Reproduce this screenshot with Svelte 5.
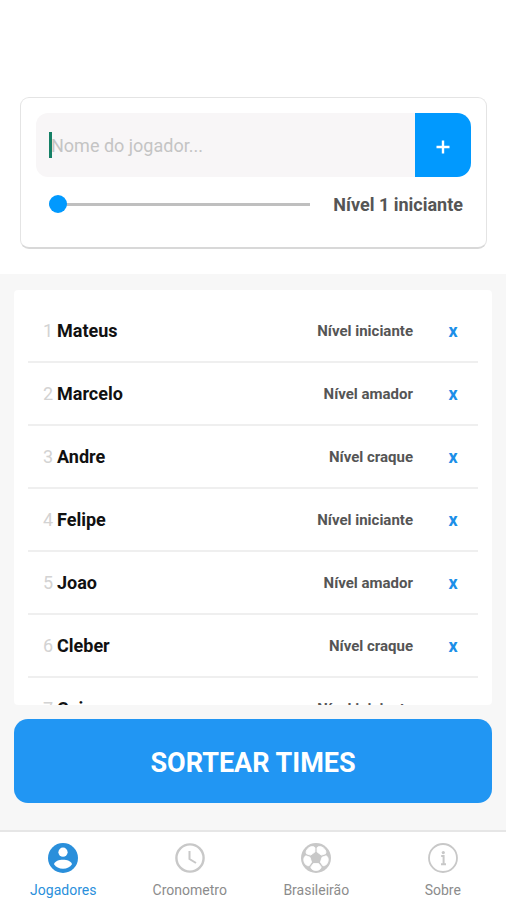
<script lang="ts">
  const niveis = ['iniciante', 'amador', 'craque'];

  let nome = $state('');
  let nivel = $state(1);
  let aba = $state('Jogadores');
  let jogadores = $state([
    { nome: 'Mateus', nivel: 1 },
    { nome: 'Marcelo', nivel: 2 },
    { nome: 'Andre', nivel: 3 },
    { nome: 'Felipe', nivel: 1 },
    { nome: 'Joao', nivel: 2 },
    { nome: 'Cleber', nivel: 3 },
    { nome: 'Caio', nivel: 1 }
  ]);

  const abas = ['Jogadores', 'Cronometro', 'Brasileirão', 'Sobre'];

  function adicionar(event: Event) {
    event.preventDefault();
    if (!nome.trim()) return;
    jogadores.push({ nome: nome.trim(), nivel });
    nome = '';
  }

  function remover(index: number) {
    jogadores.splice(index, 1);
  }

  function sortear() {
    jogadores = [...jogadores].sort(() => Math.random() - 0.5);
  }
</script>

<div class="app">
  <header class="top">
    <form class="card" onsubmit={adicionar}>
      <div class="name-row">
        <div class="field">
          <input class="name" type="text" aria-label="Nome do jogador" placeholder="Nome do jogador..." bind:value={nome} />
          {#if !nome}<span class="caret"></span>{/if}
        </div>
        <button class="add" type="submit" aria-label="Adicionar jogador">
          <svg width="14" height="14" viewBox="0 0 14 14"><path d="M7 0.5v13M0.5 7h13" stroke="#fff" stroke-width="2.4" /></svg>
        </button>
      </div>
      <div class="level-row">
        <input id="nivel" class="slider" type="range" min="1" max="3" bind:value={nivel} />
        <label class="level-label" for="nivel">Nível {nivel} {niveis[nivel - 1]}</label>
      </div>
    </form>
  </header>

  <main class="content">
    <ul class="list">
      {#each jogadores as jogador, i}
        <li class="player">
          <span class="index">{i + 1}</span>
          <span class="player-name">{jogador.nome}</span>
          <span class="player-level">Nível {niveis[jogador.nivel - 1]}</span>
          <button class="remove" aria-label="Remover {jogador.nome}" onclick={() => remover(i)}>x</button>
        </li>
      {/each}
    </ul>
    <button class="draw" onclick={sortear}>SORTEAR TIMES</button>
  </main>

  <nav class="tabs">
    {#each abas as item}
      <button class="tab" class:active={aba === item} onclick={() => (aba = item)}>
        <svg width="30" height="30" viewBox="0 0 30 30">
          {#if item === 'Jogadores'}
            <circle cx="15" cy="15" r="15" fill="currentColor" />
            <circle cx="15" cy="9.2" r="4.6" fill="#fff" />
            <path d="M6 21.2C6.8 18.2 11 16.8 15 16.8s8.2 1.4 9 4.4C22 24 19 25.7 15 25.7S8 24 6 21.2z" fill="#fff" />
          {:else if item === 'Cronometro'}
            <circle cx="15" cy="15" r="13.6" fill="none" stroke="currentColor" stroke-width="2.4" />
            <path d="M14.5 8v8l6.5 4" fill="none" stroke="currentColor" stroke-width="2" />
          {:else if item === 'Brasileirão'}
            <circle cx="15" cy="15" r="15" fill="currentColor" />
            {#each [0, 72, 144, 216, 288] as angulo}
              <path
                d="M12.4 20.5h5.2l2.6 3.4c0 1.8-2.2 3.6-5.2 3.6s-5.2-1.8-5.2-3.6z"
                fill="#fff"
                stroke="#fff"
                stroke-width="0.8"
                stroke-linejoin="round"
                transform="rotate({angulo} 15 15)"
              />
            {/each}
          {:else}
            <circle cx="15" cy="15" r="14" fill="none" stroke="currentColor" stroke-width="1.8" />
            <circle cx="15.3" cy="9.6" r="1.6" fill="currentColor" />
            <path d="M13.2 13H15.6V21M13 21.2h5" fill="none" stroke="currentColor" stroke-width="2" />
          {/if}
        </svg>
        <span>{item}</span>
      </button>
    {/each}
  </nav>
</div>

<style>
  :global(body) {
    margin: 0;
    font-family: Roboto, sans-serif;
    background: #fff;
  }

  button,
  input {
    font-family: inherit;
    border: none;
    margin: 0;
    padding: 0;
  }

  button {
    cursor: pointer;
  }

  .app {
    display: flex;
    flex-direction: column;
    height: 100vh;
  }

  .top {
    padding: 97px 19px 25px 20px;
  }

  .card {
    border: 1px solid #e4e4e4;
    border-bottom: 2px solid #d8d8d8;
    border-radius: 9px;
    padding: 15px 15px 30px;
  }

  .name-row {
    display: flex;
    height: 64px;
  }

  .field {
    position: relative;
    flex: 1;
    display: flex;
  }

  .name {
    flex: 1;
    min-width: 0;
    padding: 0 15px;
    background: #f8f6f7;
    border-radius: 12px 0 0 12px;
    color: #333;
    font-size: 18px;
    outline: none;
  }

  .name::placeholder {
    color: #c4c4c4;
    opacity: 1;
  }

  .caret {
    position: absolute;
    left: 13px;
    top: 19px;
    width: 3px;
    height: 26px;
    background: #158066;
  }

  .add {
    display: flex;
    align-items: center;
    justify-content: center;
    width: 56px;
    padding-top: 4px;
    background: #0199fe;
    border-radius: 0 14px 14px 0;
  }

  .level-row {
    display: flex;
    align-items: center;
    gap: 23px;
    padding: 15px 8px 0 13px;
  }

  .slider {
    flex: 1;
    min-width: 0;
    height: 24px;
    background: transparent;
    appearance: none;
  }

  .slider::-webkit-slider-runnable-track {
    height: 3px;
    background: #bfbfbf;
  }

  .slider::-webkit-slider-thumb {
    appearance: none;
    width: 18px;
    height: 18px;
    margin-top: -8px;
    border-radius: 50%;
    background: #0199fe;
  }

  .level-label {
    color: #555;
    font-size: 18px;
    font-weight: 700;
    line-height: 25px;
  }

  .content {
    flex: 1;
    min-height: 0;
    display: flex;
    flex-direction: column;
    gap: 14px;
    padding: 16px 14px 27px;
    background: #f7f7f7;
  }

  .list {
    flex: 1;
    min-height: 0;
    margin: 0;
    padding: 10px 14px 0;
    overflow-y: auto;
    scrollbar-width: none;
    list-style: none;
    background: #fff;
    border-radius: 4px;
  }

  .player {
    display: flex;
    align-items: center;
    height: 61px;
    padding: 0 13px 0 15px;
    border-bottom: 2px solid #efefef;
  }

  .index {
    width: 14px;
    color: #d3d3d3;
    font-size: 18px;
  }

  .player-name {
    flex: 1;
    color: #111;
    font-size: 18px;
    font-weight: 700;
  }

  .player-level {
    color: #555;
    font-size: 15px;
    font-weight: 700;
  }

  .remove {
    width: 24px;
    margin-left: 28px;
    background: transparent;
    color: #1c8fe8;
    font-size: 18px;
    font-weight: 700;
  }

  .draw {
    flex: none;
    height: 84px;
    padding-top: 3px;
    border-radius: 14px;
    background: #2196f3;
    color: #fff;
    font-size: 27px;
    font-weight: 700;
  }

  .tabs {
    display: flex;
    height: 68px;
    border-top: 2px solid #e6e6e6;
  }

  .tab {
    flex: 1;
    display: flex;
    flex-direction: column;
    align-items: center;
    gap: 9px;
    padding-top: 11px;
    background: transparent;
    color: #c8c8c8;
  }

  .tab span {
    color: #8c8c8c;
    font-size: 14px;
    line-height: 16px;
  }

  .tab.active,
  .tab.active span {
    color: #2a8fdb;
  }
</style>
